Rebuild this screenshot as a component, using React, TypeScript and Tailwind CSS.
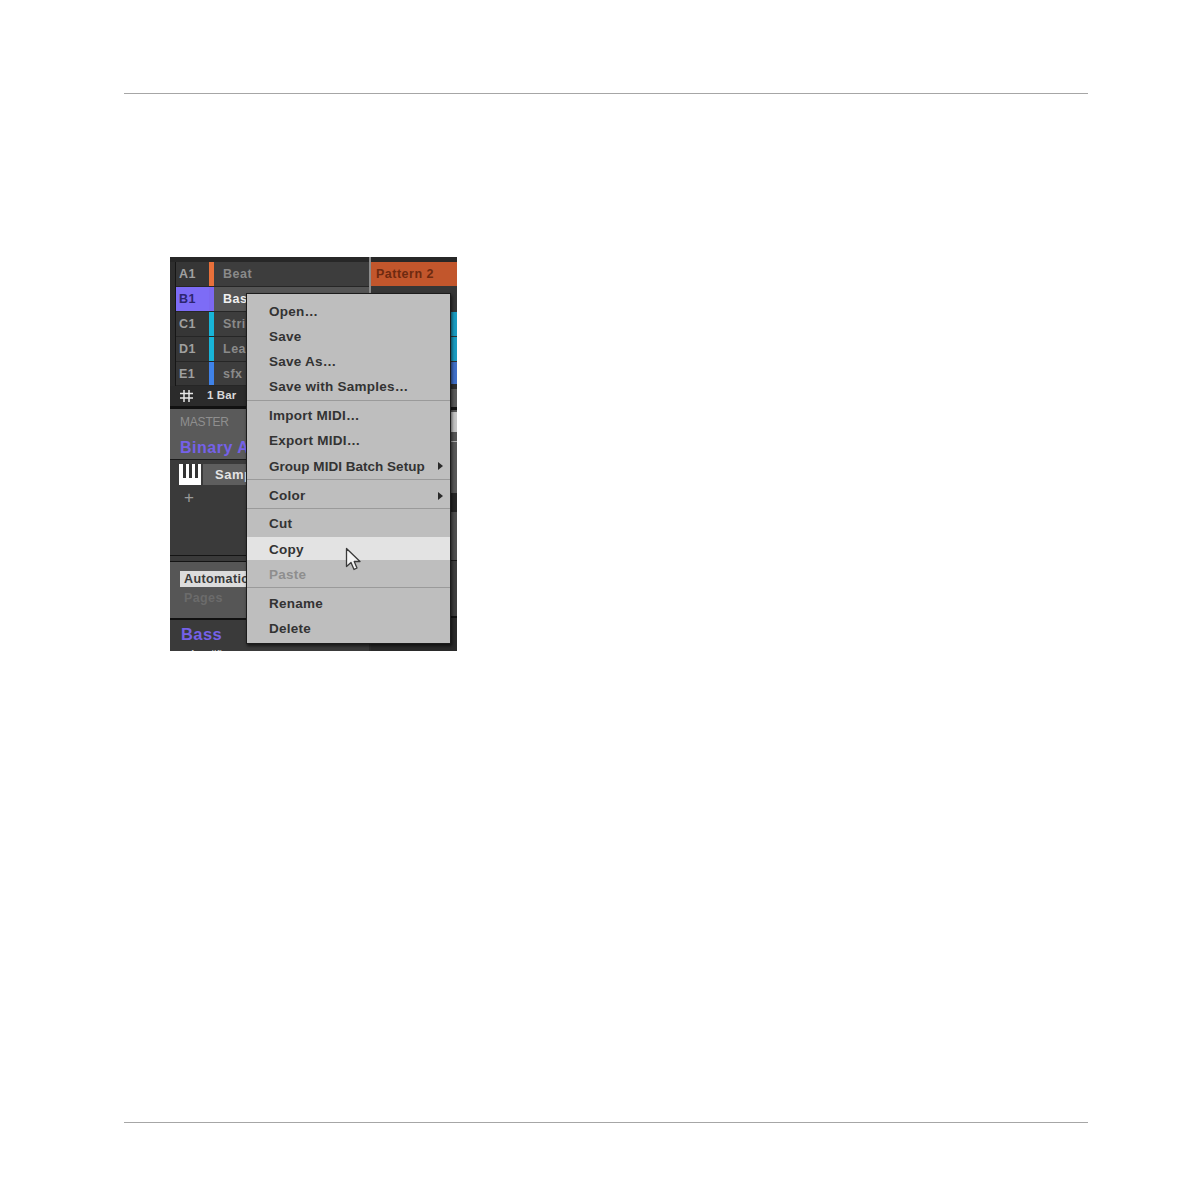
const font = { fontFamily: '"Liberation Sans", Arial, sans-serif' };

const groups = [
  { id: "A1", name: "Beat", color: "bg-[#e8703a]", pad: "" },
  { id: "B1", name: "Bass", color: "bg-[#7c68f0]", active: true, pad: "pt-[1px]" },
  { id: "C1", name: "Strings", color: "bg-[#18b4d8]", pad: "pt-[1px]" },
  { id: "D1", name: "Lead", color: "bg-[#18b4d8]", pad: "pt-[1px]" },
  { id: "E1", name: "sfx", color: "bg-[#3f82e8]", pad: "pt-[2px]" },
];

// row and section classes carry the small offsets of the menu's separators
const menu = [
  {
    cls: "",
    items: [
      { label: "Open…", row: "h-[25px]" },
      { label: "Save", row: "h-[25px]" },
      { label: "Save As…", row: "h-[25px]" },
      { label: "Save with Samples…", row: "h-[25px]" },
    ],
  },
  {
    cls: "border-t border-[#9a9a9a] pt-[3px]",
    items: [
      { label: "Import MIDI…", row: "h-[25px]" },
      { label: "Export MIDI…", row: "h-[25px]" },
      { label: "Group MIDI Batch Setup", row: "h-[24px] pt-[2px] tracking-[0.02px]", sub: true },
    ],
  },
  {
    cls: "border-t border-[#9a9a9a] mt-[1px] pt-[4px]",
    items: [{ label: "Color", row: "h-[24px]", sub: true }],
  },
  {
    cls: "border-t border-[#9a9a9a] pt-[3px]",
    items: [
      { label: "Cut", row: "h-[24px]" },
      { label: "Copy", row: "h-[23px] mt-[1px] pt-[3px] bg-[#e3e3e3]" },
      { label: "Paste", row: "h-[25px] mt-[1px] pt-[3px] text-[#8e8e8e]" },
    ],
  },
  {
    cls: "border-t border-[#9a9a9a] mt-[1px] pt-[4px]",
    items: [
      { label: "Rename", row: "h-[25px]" },
      { label: "Delete", row: "h-[25px]" },
    ],
  },
];

function Cursor() {
  return (
    <svg width="17" height="25" viewBox="0 0 17 25" className="absolute left-[98px] top-[253px]">
      <path d="M1.5 1.5 L1.5 19.5 L6 15.5 L9 22.5 L12 21 L9.2 14.5 L15 14.5 Z" fill="#f4f4f4" stroke="#3a3a3a" strokeWidth="1.3" strokeLinejoin="round" />
    </svg>
  );
}

function HashIcon() {
  return (
    <svg width="13" height="12" viewBox="0 0 13 12" className="shrink-0">
      <path d="M4 0 V12 M9 0 V12 M0 3.5 H13 M0 8 H13" stroke="#e6e6e6" strokeWidth="1.5" fill="none" />
    </svg>
  );
}

function ContextMenu() {
  return (
    <div className="absolute left-[76px] top-[36px] w-[205px] h-[351px] bg-[#bebebe] border border-[#1c1c1c] shadow-[1px_2px_3px_rgba(0,0,0,0.6)] text-[13.5px] font-bold tracking-[0.25px] text-[#333333] pt-[6px]">
      {menu.map((section, i) => (
        <div key={i} className={section.cls}>
          {section.items.map((item) => (
            <div key={item.label} className={`relative pl-[22px] flex items-center ${item.row}`}>
              {item.label}
              {item.sub && (
                <span className="absolute right-[7px] top-[8px] w-0 h-0 border-y-[4px] border-y-transparent border-l-[5px] border-l-[#2a2a2a]" />
              )}
            </div>
          ))}
        </div>
      ))}
      <Cursor />
    </div>
  );
}

function Screenshot() {
  return (
    <div className="relative w-[287px] h-[394px] flex overflow-hidden bg-[#2e2e2e]">
      {/* left column */}
      <div className="w-[199px] flex flex-col shrink-0">
        <div className="h-[5px] bg-[#272727] shrink-0" />
        <div className="ml-[5px] border-l border-[#161616] flex flex-col shrink-0">
          {groups.map((g) => (
            <div key={g.id} className="h-[25px] last:h-[24px] flex border-b border-[#262626]">
              <div className={`w-[33px] pl-[3px] flex items-center text-[12.5px] font-bold tracking-[0.4px] ${g.pad} ${g.active ? "bg-[#7d6cf6] text-[#2d2670]" : "bg-[#363636] text-[#a0a0a0]"}`}>
                {g.id}
              </div>
              <div className={`w-[5px] ${g.color}`} />
              <div className={`flex-1 pl-[9px] flex items-center text-[12.5px] font-bold tracking-[0.5px] ${g.pad} ${g.active ? "bg-[#555555] text-[#f0f0f0]" : "bg-[#3d3d3d] text-[#8a8a8a]"}`}>
                {g.name}
              </div>
            </div>
          ))}
        </div>
        <div className="h-[20px] shrink-0 bg-[#2b2b2b] flex items-center pl-[10px] gap-[14px] text-[11.5px] font-bold tracking-[0.1px] text-[#d8d8d8]">
          <HashIcon />
          <span>1 Bar</span>
        </div>
        <div className="h-[3px] shrink-0 bg-[#111111]" />
        <div className="h-[51px] shrink-0 bg-[#5a5a5a] pl-[10px] pt-[6px] border-b border-[#1a1a1a]">
          <div className="text-[12px] tracking-[-0.2px] text-[#8f8f8f] leading-[14px]">MASTER</div>
          <div className="mt-[10px] text-[16px] font-bold tracking-[0.5px] text-[#7561e8] leading-[18px] whitespace-nowrap">Binary Acid</div>
        </div>
        <div className="h-[96px] shrink-0 bg-[#3a3a3a] border-b border-[#141414]">
          <div className="flex items-center pl-[9px] pt-[4px] gap-[2px]">
            <div className="w-[22px] h-[21px] bg-white flex justify-around px-[2px] shrink-0">
              <span className="w-[3px] h-[14px] bg-[#333333]" />
              <span className="w-[3px] h-[14px] bg-[#333333]" />
              <span className="w-[3px] h-[14px] bg-[#333333]" />
            </div>
            <div className="flex-1 h-[21px] bg-[#5e5e5e] pl-[12px] flex items-center text-[13px] font-bold tracking-[0.5px] text-[#e4e4e4]">Sampler</div>
          </div>
          <div className="pl-[14px] text-[17px] leading-[20px] text-[#9a9a9a] mt-[3px]">+</div>
        </div>
        <div className="h-[6px] shrink-0 bg-[#3a3a3a] border-b border-[#141414]" />
        <div className="h-[58px] shrink-0 bg-[#565656] pl-[10px] pt-[9px] border-b-2 border-[#111111]">
          <div className="w-[120px] h-[16px] bg-[#dcdcdc] pl-[4px] flex items-center text-[12.5px] font-bold tracking-[0.4px] text-[#3a3a3a]">Automation</div>
          <div className="pl-[4px] mt-[3px] text-[12.5px] font-bold tracking-[0.4px] text-[#6b6b6b] leading-[16px]">Pages</div>
        </div>
        <div className="flex-1 min-h-0 bg-[#3a3a3a] pl-[11px] pt-[4px]">
          <div className="text-[16.5px] font-bold tracking-[0.4px] text-[#7561e8] leading-[20px]">Bass</div>
          <div className="text-[11px] text-[#cfcfcf] leading-[12px] mt-[4px] pl-[8px]">Amplifier</div>
        </div>
      </div>

      {/* divider */}
      <div className="w-[2px] bg-[#8c8c8c] h-[36px] shrink-0" />

      {/* right column */}
      <div className="flex-1 flex flex-col bg-[#333333]">
        <div className="h-[5px] shrink-0 bg-[#272727]" />
        <div className="h-[24px] shrink-0 bg-[#c2562c] pl-[5px] flex items-center text-[12.5px] font-bold tracking-[0.5px] text-[#6e2a10]">Pattern 2</div>
        <div className="h-[26px] shrink-0 bg-[#363636]" />
        <div className="ml-auto w-[7px] h-[24px] mb-[1px] shrink-0 bg-[#1a9bc0]" />
        <div className="ml-auto w-[7px] h-[24px] mb-[1px] shrink-0 bg-[#1a9bc0]" />
        <div className="ml-auto w-[7px] h-[22px] shrink-0 bg-[#3f6fc8]" />
        <div className="ml-auto w-[7px] h-[5px] shrink-0 bg-[#2e2e2e]" />
        <div className="ml-auto w-[7px] h-[18px] shrink-0 bg-[#5a5a5a]" />
        <div className="ml-auto w-[7px] h-[3px] shrink-0 bg-[#111111]" />
        <div className="ml-auto w-[7px] h-[2px] shrink-0 bg-[#555555]" />
        <div className="ml-auto w-[7px] h-[20px] shrink-0 bg-[#c4c4c4]" />
        <div className="ml-auto w-[7px] h-[9px] shrink-0 bg-[#555555]" />
        <div className="ml-auto w-[7px] h-[1px] shrink-0 bg-[#b0b0b0]" />
        <div className="ml-auto w-[7px] h-[51px] shrink-0 bg-[#585858]" />
        <div className="ml-auto w-[7px] h-[19px] shrink-0 bg-[#262626]" />
        <div className="ml-auto w-[7px] h-[49px] shrink-0 bg-[#4f4f4f] border-b border-[#1a1a1a]" />
        <div className="ml-auto w-[7px] h-[57px] shrink-0 bg-[#3e3e3e] border-b-2 border-[#111111]" />
        <div className="flex-1 min-h-0 bg-[#2a2a2a]" />
      </div>
      <ContextMenu />
    </div>
  );
}

export default function App() {
  return (
    <div className="w-[1191px] h-[1191px] bg-white flex flex-col px-[124px] pt-[93px] pb-[68px]" style={font}>
      <div className="h-px bg-[#a6a6a6] w-[964px]" />
      <div className="flex-1 pt-[163px] pl-[46px]">
        <Screenshot />
      </div>
      <div className="h-px bg-[#a6a6a6] w-[964px]" />
    </div>
  );
}
